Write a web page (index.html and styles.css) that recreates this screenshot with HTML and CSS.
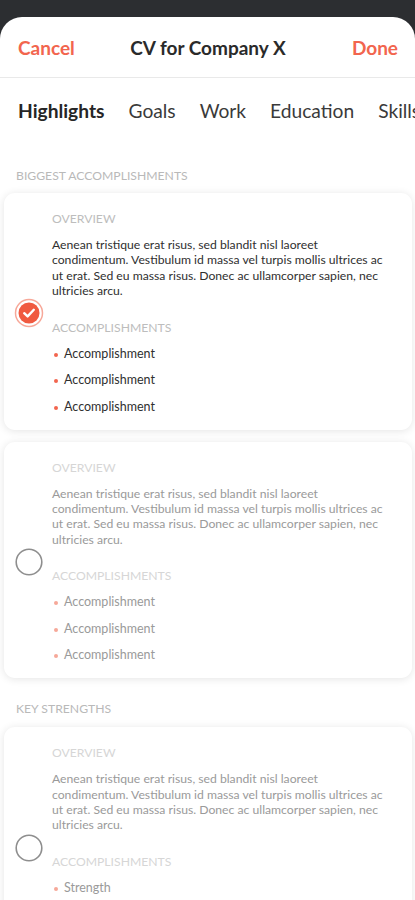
FILE: index.html
```html
<!DOCTYPE html>
<html>
<head>
<meta charset="utf-8">
<link rel="stylesheet" href="styles.css">
</head>
<body>
<div class="sheet">
  <header class="topbar">
    <span class="action">Cancel</span>
    <span class="title">CV for Company X</span>
    <span class="action done">Done</span>
  </header>
  <nav class="tabs">
    <span class="tab active">Highlights</span>
    <span class="tab">Goals</span>
    <span class="tab">Work</span>
    <span class="tab">Education</span>
    <span class="tab">Skills</span>
  </nav>

  <div class="section-label">BIGGEST ACCOMPLISHMENTS</div>

  <div class="card">
    <div class="check checked">
      <svg width="30" height="30" viewBox="0 0 30 30">
        <circle cx="15" cy="15" r="13.5" fill="none" stroke="#f7a899" stroke-width="1.5"/>
        <circle cx="15" cy="15" r="10.5" fill="#f05a40"/>
        <path d="M10.2 15.2 L13.6 18.4 L19.8 11.8" fill="none" stroke="#fff" stroke-width="2.4" stroke-linecap="round" stroke-linejoin="round"/>
      </svg>
    </div>
    <div class="body">
      <div class="label">OVERVIEW</div>
      <p class="text">Aenean tristique erat risus, sed blandit nisl laoreet condimentum. Vestibulum id massa vel turpis mollis ultrices ac ut erat. Sed eu massa risus. Donec ac ullamcorper sapien, nec ultricies arcu.</p>
      <div class="label label2">ACCOMPLISHMENTS</div>
      <ul class="list">
        <li>Accomplishment</li>
        <li>Accomplishment</li>
        <li>Accomplishment</li>
      </ul>
    </div>
  </div>

  <div class="card">
    <div class="check">
      <svg width="30" height="30" viewBox="0 0 30 30">
        <circle cx="15" cy="15" r="12.8" fill="none" stroke="#8e8e8e" stroke-width="1.6"/>
      </svg>
    </div>
    <div class="body faded">
      <div class="label">OVERVIEW</div>
      <p class="text">Aenean tristique erat risus, sed blandit nisl laoreet condimentum. Vestibulum id massa vel turpis mollis ultrices ac ut erat. Sed eu massa risus. Donec ac ullamcorper sapien, nec ultricies arcu.</p>
      <div class="label label2">ACCOMPLISHMENTS</div>
      <ul class="list">
        <li>Accomplishment</li>
        <li>Accomplishment</li>
        <li>Accomplishment</li>
      </ul>
    </div>
  </div>

  <div class="section-label section-label2">KEY STRENGTHS</div>

  <div class="card">
    <div class="check">
      <svg width="30" height="30" viewBox="0 0 30 30">
        <circle cx="15" cy="15" r="12.8" fill="none" stroke="#8e8e8e" stroke-width="1.6"/>
      </svg>
    </div>
    <div class="body faded">
      <div class="label">OVERVIEW</div>
      <p class="text">Aenean tristique erat risus, sed blandit nisl laoreet condimentum. Vestibulum id massa vel turpis mollis ultrices ac ut erat. Sed eu massa risus. Donec ac ullamcorper sapien, nec ultricies arcu.</p>
      <div class="label label2">ACCOMPLISHMENTS</div>
      <ul class="list">
        <li>Strength</li>
        <li>Strength</li>
        <li>Strength</li>
      </ul>
    </div>
  </div>
</div>
</body>
</html>
```

FILE: styles.css
```css
html, body {
  margin: 0;
  padding: 0;
}
body {
  background: #2c2e31;
  font-family: Lato, "Open Sans", sans-serif;
  width: 415px;
  height: 900px;
  overflow: hidden;
}
.sheet {
  margin-top: 17px;
  background: #fff;
  border-radius: 22px 22px 0 0;
  min-height: 900px;
}
.topbar {
  height: 61px;
  display: grid;
  grid-template-columns: 1fr auto 1fr;
  align-items: center;
  padding: 0 17px 0 18px;
  border-bottom: 1px solid #e9e9e9;
  box-sizing: border-box;
}
.action {
  color: #f2654e;
  font-size: 19px;
  font-weight: 700;
}
.done {
  justify-self: end;
}
.title {
  color: #2a2a2a;
  font-size: 19px;
  font-weight: 700;
}
.tabs {
  display: flex;
  gap: 24px;
  padding: 21px 18px 0;
  white-space: nowrap;
  overflow: hidden;
}
.tab {
  font-size: 19.2px;
  line-height: 24px;
  color: #3a3a3a;
}
.tab.active {
  font-weight: 700;
  color: #262626;
}
.section-label {
  margin: 46px 0 10px 16px;
  font-size: 12.2px;
  line-height: 14px;
  color: #b9b9b9;
}
.section-label2 {
  margin-top: 24px;
  margin-bottom: 11px;
}
.card {
  margin: 0 3px 12px 4px;
  background: #fff;
  border-radius: 11px;
  box-shadow: 0 1px 9px rgba(0, 0, 0, 0.11);
  display: flex;
  align-items: center;
  padding: 19px 16px 15px 10px;
}
.check {
  width: 30px;
  height: 30px;
  flex: none;
  margin-right: 8px;
}
.check svg {
  display: block;
}
.body {
  flex: 1;
}
.label {
  font-size: 12.2px;
  line-height: 14px;
  color: #bdbdbd;
}
.label2 {
  margin-top: 22px;
}
.text {
  margin: 11px 0 0;
  font-size: 12.2px;
  line-height: 15.4px;
  color: #2f2f2f;
}
.list {
  list-style: none;
  margin: 11px 0 0;
  padding: 0;
  display: flex;
  flex-direction: column;
  gap: 10.5px;
}
.list li {
  position: relative;
  padding-left: 12px;
  font-size: 12.5px;
  line-height: 16px;
  color: #2f2f2f;
}
.list li::before {
  content: "";
  position: absolute;
  left: 2px;
  top: 7px;
  width: 4px;
  height: 4px;
  border-radius: 50%;
  background: #f2654e;
}
.faded .text,
.faded .list li {
  color: #9a9a9a;
}
.faded .label {
  color: #d6d6d6;
}
.faded .list li::before {
  background: #f6a899;
}
```
